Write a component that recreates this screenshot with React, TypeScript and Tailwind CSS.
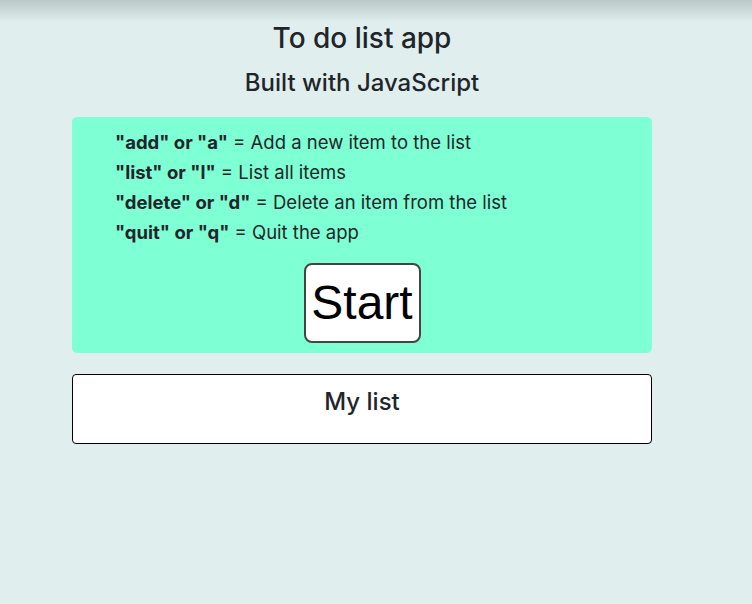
import React from "react";

export default function App() {
  const items: [string, string][] = [
    ['"add" or "a"', "Add a new item to the list"],
    ['"list" or "l"', "List all items"],
    ['"delete" or "d"', "Delete an item from the list"],
    ['"quit" or "q"', "Quit the app"],
  ];
  return (
    <div
      className="relative w-[752px] h-[604px] bg-[#e0eeee] text-[#212529] overflow-hidden"
      style={{ fontFamily: "Inter, 'Noto Sans', sans-serif" }}
    >
      <div className="absolute left-0 top-0 w-full h-[22px] bg-gradient-to-b from-[#bac8c8] to-[#e0eeee]" />
      <div className="relative w-[724px] flex flex-col items-center">
        <h1 className="mt-[20px] text-[28px] leading-[36px] font-medium">To do list app</h1>
        <h2 className="mt-[12px] text-[24px] leading-[30px] font-medium">Built with JavaScript</h2>
        <div className="mt-[19px] w-[580px] bg-[#7fffd4] rounded-[5px] pt-[10px] pb-[10px] flex flex-col">
          <ul className="pl-[43px]">
            {items.map(([k, v]) => (
              <li key={k} className="text-[18.5px] leading-[30px]">
                <b className="font-bold">{k}</b> = {v}
              </li>
            ))}
          </ul>
          <div className="mt-[16px] flex justify-center">
            <button
              className="w-[117px] h-[80px] bg-white border-2 border-[#444] rounded-[8px] text-black text-[48px] leading-none"
              style={{ fontFamily: "'Liberation Sans', Arial, sans-serif" }}
            >
              Start
            </button>
          </div>
        </div>
        <div className="mt-[21px] w-[580px] h-[70px] bg-white border border-black rounded-[4px] flex justify-center">
          <h3 className="mt-[12px] text-[24px] leading-[30px] font-medium">My list</h3>
        </div>
      </div>
    </div>
  );
}
